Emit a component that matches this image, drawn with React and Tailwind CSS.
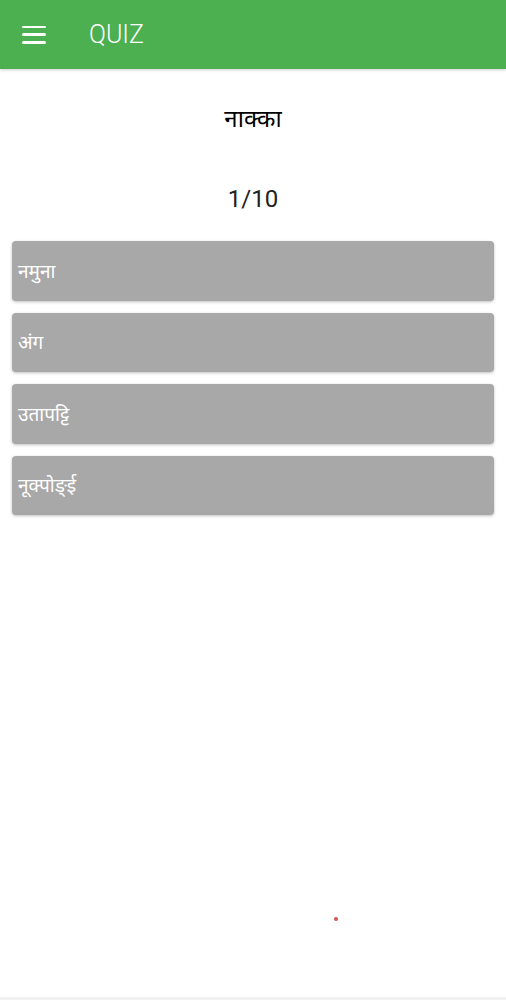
import { useState } from "react";

const OPTIONS = ["नमुना", "अंग", "उतापट्टि", "नूक्पोङ्ई"];

export default function App() {
  const [picked, setPicked] = useState(null);

  return (
    <div
      className="relative w-[506px] h-[1000px] bg-white overflow-hidden"
      style={{ fontFamily: '"Noto Sans", Roboto, sans-serif' }}
    >
      {/* App bar */}
      <div className="h-[69px] bg-[#4caf50] flex items-center shadow-[0_1px_3px_rgba(0,0,0,0.2)]">
        <button className="ml-[22px] w-[24px] h-[18px] flex flex-col justify-between">
          <span className="block h-[2.5px] w-full bg-white rounded-sm" />
          <span className="block h-[2.5px] w-full bg-white rounded-sm" />
          <span className="block h-[2.5px] w-full bg-white rounded-sm" />
        </button>
        <h1
          className="ml-[43px] text-[25px] font-light text-white"
          style={{ fontFamily: "Roboto, sans-serif" }}
        >
          QUIZ
        </h1>
      </div>

      {/* Question */}
      <div className="pt-[33px] text-center">
        <p className="text-[24px] leading-[32px] text-black">नाक्का</p>
        <p className="mt-[50px] text-[24px] leading-[30px] text-[#222]" style={{ fontFamily: "Roboto, sans-serif" }}>
          1/10
        </p>
      </div>

      {/* Options */}
      <div className="mt-[27px] px-[12px] flex flex-col gap-[12px]">
        {OPTIONS.map((opt, i) => (
          <button
            key={opt}
            onClick={() => setPicked(i)}
            className={`h-[59.5px] w-full rounded-[4px] flex items-center pl-[6px] text-[19px] text-white shadow-[0_1px_3px_rgba(0,0,0,0.25)] ${
              picked === i ? "bg-[#9e9e9e]" : "bg-[#a9a8a8]"
            }`}
          >
            {opt}
          </button>
        ))}
      </div>

      {/* stray dot */}
      <span className="absolute left-[334px] top-[917px] w-[4px] h-[4px] rounded-full bg-[#d9534f]" />
      <div className="absolute left-0 right-0 bottom-0 h-[3px] bg-[#f2f2f2]" />
    </div>
  );
}
